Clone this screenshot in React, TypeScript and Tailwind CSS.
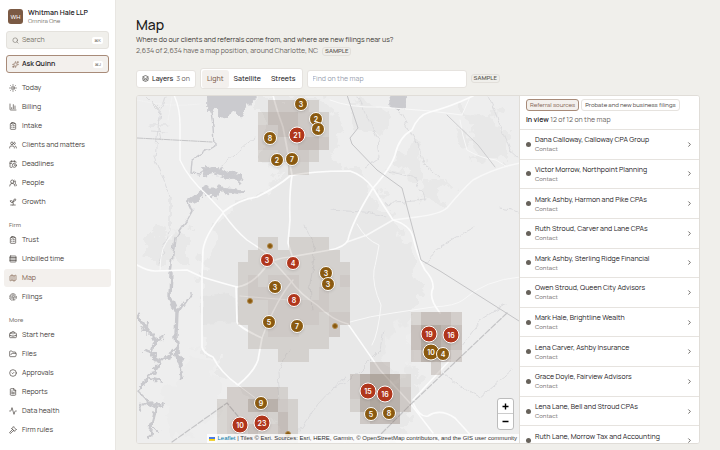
import type { ReactNode } from "react";
import {
  Activity,
  BriefcaseBusiness,
  CalendarClock,
  ChartColumn,
  ChevronRight,
  CircleCheck,
  ClipboardList,
  FileText,
  Fingerprint,
  FolderOpen,
  Gavel,
  Layers,
  Map as MapIcon,
  Rows4,
  Search,
  Sparkles,
  Sprout,
  Sun,
  Users,
  UsersRound,
  type LucideIcon,
} from "lucide-react";

type NavItem = { label: string; icon: LucideIcon; active?: boolean };

const primary: NavItem[] = [
  { label: "Today", icon: Sun },
  { label: "Billing", icon: ChartColumn },
  { label: "Intake", icon: ClipboardList },
  { label: "Clients and matters", icon: Users },
  { label: "Deadlines", icon: CalendarClock },
  { label: "People", icon: UsersRound },
  { label: "Growth", icon: Sprout },
];

const firm: NavItem[] = [
  { label: "Trust", icon: ClipboardList },
  { label: "Unbilled time", icon: Rows4 },
  { label: "Map", icon: MapIcon, active: true },
  { label: "Filings", icon: Fingerprint },
];

const more: NavItem[] = [
  { label: "Start here", icon: BriefcaseBusiness },
  { label: "Files", icon: FolderOpen },
  { label: "Approvals", icon: CircleCheck },
  { label: "Reports", icon: FileText },
  { label: "Data health", icon: Activity },
  { label: "Firm rules", icon: Gavel },
];

const contacts = [
  "Dana Calloway, Calloway CPA Group",
  "Victor Morrow, Northpoint Planning",
  "Mark Ashby, Harmon and Pike CPAs",
  "Ruth Stroud, Carver and Lane CPAs",
  "Mark Ashby, Sterling Ridge Financial",
  "Owen Stroud, Queen City Advisors",
  "Mark Hale, Brightline Wealth",
  "Lena Carver, Ashby Insurance",
  "Grace Doyle, Fairview Advisors",
  "Lena Lane, Bell and Stroud CPAs",
  "Ruth Lane, Morrow Tax and Accounting",
];

// World coordinates of the map canvas' top left corner.
const ORIGIN = { x: 137, y: 96 };

type Marker = { x: number; y: number; n?: number; hot?: boolean };

const markers: Marker[] = [
  { x: 301, y: 104, n: 3 },
  { x: 316, y: 119, n: 2 },
  { x: 318, y: 129, n: 4 },
  { x: 270, y: 138, n: 8 },
  { x: 297, y: 135, n: 21, hot: true },
  { x: 277, y: 160, n: 2 },
  { x: 292, y: 159, n: 7 },
  { x: 270, y: 246 },
  { x: 267, y: 260, n: 3, hot: true },
  { x: 293, y: 263, n: 4, hot: true },
  { x: 326, y: 273, n: 3 },
  { x: 328, y: 284, n: 3 },
  { x: 275, y: 287, n: 3 },
  { x: 294, y: 300, n: 8, hot: true },
  { x: 250, y: 301 },
  { x: 269, y: 322, n: 5 },
  { x: 297, y: 326, n: 7 },
  { x: 335, y: 326 },
  { x: 429, y: 334, n: 19, hot: true },
  { x: 451, y: 335, n: 16, hot: true },
  { x: 431, y: 352, n: 10 },
  { x: 443, y: 354, n: 4 },
  { x: 368, y: 391, n: 15, hot: true },
  { x: 385, y: 394, n: 16, hot: true },
  { x: 371, y: 414, n: 5 },
  { x: 389, y: 413, n: 8 },
  { x: 261, y: 403, n: 9 },
  { x: 240, y: 425, n: 10, hot: true },
  { x: 262, y: 423, n: 23, hot: true },
  { x: 288, y: 434 },
];

// Density grids: one digit per cell, a dot for an empty cell.
const CELL_W = 10.18;
const CELL_H = 12.46;
const density = [
  { x: 257.7, y: 100, rows: [".22221.", "1333221", "2233221", "2222332", "112221.", "...11.."] },
  {
    x: 237.7,
    y: 237.3,
    rows: [
      "..11.1111..",
      ".111111111.",
      "11111111111",
      "12122211112",
      "12222211211",
      "11122222211",
      "11122222122",
      ".112221112.",
      ".11111111..",
      "....111....",
    ],
  },
  { x: 217, y: 387, rows: [".222221.", "12244421", "12222131", "12232231", "12222221"] },
  { x: 349.5, y: 362, rows: ["..22..", "245541", "245542", "145442", ".2333."] },
  { x: 410.7, y: 312.3, rows: ["13332", "35543", "35543", "24432", "..2.."] },
];
const shade = [0, 0.15, 0.2, 0.28, 0.36, 0.43];

function NavList({ items }: { items: NavItem[] }) {
  return (
    <ul className="flex flex-col gap-px">
      {items.map(({ label, icon: Icon, active }) => (
        <li key={label}>
          <a
            href="#"
            className={
              active
                ? "flex h-[18px] items-center gap-[5px] rounded-[3px] bg-[#f3f0ed] pl-[5px] text-[#80604d]"
                : "flex h-[18px] items-center gap-[5px] rounded-[3px] pl-[5px] text-[#45403b]"
            }
          >
            <Icon className="size-2 shrink-0" strokeWidth={2} />
            {label}
          </a>
        </li>
      ))}
    </ul>
  );
}

function SectionLabel({ children }: { children: ReactNode }) {
  return <h2 className="flex h-5 items-center pt-2 pl-[5px] text-[6px] font-medium text-[#77726a]">{children}</h2>;
}

function Sample() {
  return (
    <span className="rounded-[3px] border border-[#e2dfda] px-[2px] text-[6px] leading-[7px] font-semibold text-[#5f5a53]">
      SAMPLE
    </span>
  );
}

function BaseMap() {
  return (
    <svg
      viewBox="137 96 382 347"
      preserveAspectRatio="xMinYMin slice"
      className="block h-full w-full"
      fill="none"
      strokeLinecap="round"
      strokeLinejoin="round"
      aria-hidden="true"
    >
      <defs>
        <filter id="shore" x="-20%" y="-20%" width="140%" height="140%">
          <feTurbulence type="fractalNoise" baseFrequency="0.13" numOctaves="3" seed="8" />
          <feDisplacementMap in="SourceGraphic" scale="11" xChannelSelector="R" yChannelSelector="G" />
        </filter>
        <filter id="edge" x="-10%" y="-10%" width="120%" height="120%">
          <feTurbulence type="fractalNoise" baseFrequency="0.06" numOctaves="4" seed="3" />
          <feDisplacementMap in="SourceGraphic" scale="34" xChannelSelector="R" yChannelSelector="G" />
        </filter>
        <filter id="creek" x="-10%" y="-10%" width="120%" height="120%">
          <feTurbulence type="fractalNoise" baseFrequency="0.12" numOctaves="2" seed="5" />
          <feDisplacementMap in="SourceGraphic" scale="7" xChannelSelector="R" yChannelSelector="G" />
        </filter>
      </defs>
      <rect x="137" y="96" width="382" height="347" fill="#eeeeee" />
      <g fill="#e8e8e8" filter="url(#edge)">
        <path d="M225 215 L262 190 L330 160 L372 185 L400 230 L425 290 L400 330 L420 380 L400 440 L300 450 L240 390 L205 350 L200 270Z" />
        <path d="M262 95 L325 95 L340 130 L330 172 L275 180 L262 150Z" />
        <path d="M462 112 L505 118 L505 160 L470 158Z" />
        <path d="M405 140 L425 150 L420 182 L395 175Z" />
        <path d="M150 232 L190 235 L190 262 L140 262Z" />
        <path d="M425 175 L450 185 L440 205 L420 200Z" />
        <path d="M350 100 L385 105 L395 135 L365 130Z" />
      </g>
      <g fill="#e3e3e3">
        <path d="M203 296 L228 293 L238 301 L238 322 L203 324Z" filter="url(#creek)" />
      </g>
      <g fill="#ececec" filter="url(#edge)">
        <path d="M385 335 L410 320 L412 360 L392 390Z" />
        <path d="M195 350 L225 375 L215 420 L175 440 L160 400Z" />
      </g>

      <g stroke="#d7d7d9" strokeWidth="0.8" filter="url(#creek)">
        <path d="M147 97 L160 110 L155 157 L170 197 L170 230 L158 265" />
        <path d="M165 97 L158 120 L162 140 M150 125 L168 125 M152 131 L166 132" />
        <path d="M358 97 L378 140 L380 158 L365 168" />
        <path d="M400 112 L420 150 L425 165 L440 178" />
        <path d="M385 170 L415 178 L425 200 L385 204" />
        <path d="M488 97 L500 125 L510 150 L519 158" />
        <path d="M500 208 L512 210 L519 212" />
        <path d="M474 228 L440 246 L424 265" />
        <path d="M330 210 L365 212 L385 216" />
        <path d="M255 137 L240 150 L222 165" />
        <path d="M330 390 L352 378 L380 350 L384 330" />
        <path d="M443 372 L458 385 L480 397 L512 370" />
        <path d="M507 303 L480 320 L462 345" />
        <path d="M305 225 L315 250 L310 285 L312 310" />
        <path d="M290 350 L278 372 L280 400" />
        <path d="M300 430 L318 404 L345 375" />
      </g>

      <g fill="#cbcbcf" stroke="#cbcbcf" strokeWidth="1" filter="url(#shore)">
        <path d="M208 92 L258 92 L253 103 L244 108 L240 117 L232 112 L222 118 L216 108 L208 113Z" />
        <path d="M389 95 L402 92 L405 104 L400 110 L391 107Z" />
        <path d="M204 168 L216 166 L226 171 L240 177 L242 182 L228 178 L214 174 L206 176Z" />
        <path d="M187 200 L196 194 L206 187 L222 187 L244 190 L240 194 L222 191 L214 198 L208 193 L196 202Z" />
      </g>
      <g stroke="#c9c9cd" filter="url(#creek)">
        <path d="M211 112 L213 125 L214 146 L192 160 L191 173 L201 174 L210 168" strokeWidth="1.4" />
        <path d="M188 202 L192 211 L186 222 L175 238 L171 272" strokeWidth="1.6" />
        <path d="M171 272 L170 297 L177 313 L176 335 L179 362" strokeWidth="3.4" />
        <path d="M191 293 L185 302 L177 314" strokeWidth="1.8" />
      </g>
      <g stroke="#c9c9cd" strokeWidth="3" filter="url(#shore)">
        <path d="M138 314 L146 330 L156 340 L152 352 L158 364 L148 378 L138 390 L146 398 L156 408 L152 424 L150 437" />
        <path d="M156 362 L168 356 L176 350 L180 362 L182 376" />
        <path d="M158 340 L166 334 M146 330 L148 322 M148 378 L162 382 M156 408 L166 404 M152 424 L160 432 M146 400 L140 410 M152 352 L144 350" strokeWidth="2" />
      </g>

      <g stroke="#f8f8f8" strokeWidth="1">
        <path d="M460 120 Q462 135 467 150 Q480 158 496 160 L507 167" />
        <path d="M357 224 Q366 240 379 245 Q376 262 374 270 Q372 285 381 305 Q378 335 372 345" />
        <path d="M350 322 Q370 316 393 313 L433 307 Q455 306 463 300 Q485 280 520 277" />
        <path d="M137 100 Q170 108 200 104" opacity="0.4" />
        <path d="M330 100 Q350 108 380 107 L430 111 L462 115 L470 97" />
        <path d="M347 242 L367 235 L393 220 L417 217 Q440 214 447 208 Q462 190 473 180 Q495 168 520 163" strokeWidth="1.5" />
        <path d="M240 296 L290 300" />
        <path d="M172 97 L168 120" opacity="0.4" />
        <path d="M160 270 Q160 245 172 235" />
      </g>
      <g stroke="#fcfcfc" strokeWidth="1.7">
        <path d="M174 95 Q180 108 180 125 L180 160 Q188 178 207 195 L223 212" strokeWidth="1.4" />
        <path d="M223 213 Q205 235 203 250 L202 277 L202 347 Q203 353 213 357 Q220 372 238 385 Q254 372 258 360 L262 338 Q240 328 237 322 L236 287" />
        <path d="M137 265 Q148 271 155 271 L187 270 L202 277 Q225 284 237 287 Q253 285 267 265 Q275 258 290 257 L330 250 Q345 247 348 240 Q352 222 373 188 Q391 168 395 155 Q399 137 412 130 Q418 115 430 112 Q450 107 473 96" />
        <path d="M223 212 Q240 199 257 197 Q277 187 290 176 Q310 171 350 171 Q363 175 373 188 Q383 205 393 220 Q410 225 413 237 Q418 258 425 270 Q434 280 433 288 Q428 298 440 313" />
        <path d="M273 95 Q276 108 283 127 L292 175 Q289 195 290 220 L288 243 L294 262" />
        <path d="M223 213 Q235 230 247 240 L265 252 L290 280 Q300 294 317 305 Q332 320 348 324 L380 370 L410 403 L433 433" strokeWidth="1.4" />
        <path d="M293 280 Q276 300 262 338" strokeWidth="1.4" />
        <path d="M450 360 L413 400 M413 403 Q420 418 428 416 Q440 408 455 418 L475 440" />
        <path d="M238 385 L258 400" strokeWidth="1" />
      </g>

      <g stroke="#c4c4c6" strokeWidth="1">
        <path d="M347 95 L358 128 L350 138 L352 144 L377 170 L402 188 L421 260 L440 271 L519 321" />
        <path d="M447 115 L478 145 L495 167" strokeWidth="0.8" />
        <path d="M137 138 L212 142" strokeDasharray="6 1 1 1" />
        <path d="M507 313 L410 405 L375 440 M172 442 L227 403 L246 426" strokeWidth="1.2" strokeDasharray="6 2" />
      </g>

      <g fill="#67503f" stroke="none" shapeRendering="crispEdges">
        {density.map((block) =>
          block.rows.map((row, j) =>
            [...row].map((digit, i) =>
              digit === "." ? null : (
                <rect
                  key={`${block.x}-${j}-${i}`}
                  x={block.x + i * CELL_W}
                  y={block.y + j * CELL_H}
                  width={CELL_W}
                  height={CELL_H}
                  opacity={shade[Number(digit)]}
                />
              ),
            ),
          ),
        )}
      </g>
    </svg>
  );
}

function MapMarker({ x, y, n, hot }: Marker) {
  const place = { left: x - ORIGIN.x, top: y - ORIGIN.y };
  if (n === undefined) {
    return (
      <button
        type="button"
        aria-label="Single record"
        style={place}
        className="absolute size-[6px] -translate-1/2 rounded-full border border-[#b08a4c] bg-[#8a5a10]"
      />
    );
  }
  const size = n >= 10 ? "size-[17px]" : "size-[14px]";
  const color = hot ? "bg-[#b0361c]" : "bg-[#8a5a10]";
  return (
    <button
      type="button"
      style={place}
      className={`absolute flex -translate-1/2 items-center justify-center rounded-full border border-white font-['Inter',sans-serif] text-[7px] leading-none font-semibold text-white shadow-sm ${size} ${color}`}
    >
      {n}
    </button>
  );
}

export default function App() {
  return (
    <div className="flex h-screen overflow-hidden bg-[#f0efeb] font-['Manrope','Inter',sans-serif] text-[7px] leading-[10px] text-[#3b3733]">
      <aside className="w-[116px] shrink-0 border-r border-[#e8e6e2] bg-white px-1 pt-2">
        <div className="flex items-center gap-[5px] pl-1">
          <span className="flex size-[15px] items-center justify-center rounded-[3px] bg-[#7b5a44] text-[6px] font-medium text-white">
            WH
          </span>
          <div>
            <p className="text-[7px] leading-[9px] font-semibold text-[#23201d]">Whitman Hale LLP</p>
            <p className="text-[6px] leading-2 text-[#77726a]">Omnira One</p>
          </div>
        </div>

        <div className="mx-[2px] mt-[6px] flex flex-col gap-[6px]">
          <button
            type="button"
            className="flex h-[18px] items-center gap-[3px] rounded-[3px] border border-[#e4e2dd] bg-[#f0efeb] px-[5px] text-[#77726a]"
          >
            <Search className="size-[7px]" />
            Search
            <kbd className="ml-auto rounded-[2px] bg-white px-[2px] font-['Inter',sans-serif] text-[4px] leading-[7px]">⌘K</kbd>
          </button>
          <button
            type="button"
            className="flex h-[18px] items-center gap-[3px] rounded-[3px] border border-[#a88b79] bg-[#f3f0ed] px-[5px] font-semibold text-[#23201d]"
          >
            <Sparkles className="size-[7px] text-[#80604d]" />
            Ask Quinn
            <kbd className="ml-auto rounded-[2px] bg-white px-[2px] font-['Inter',sans-serif] text-[4px] leading-[7px] font-normal text-[#77726a]">
              ⌘J
            </kbd>
          </button>
        </div>

        <nav className="mt-[6px]">
          <NavList items={primary} />
          <SectionLabel>Firm</SectionLabel>
          <NavList items={firm} />
          <SectionLabel>More</SectionLabel>
          <NavList items={more} />
        </nav>
      </aside>

      <main className="flex min-w-0 flex-1 flex-col px-5 pt-[15px] pb-[6px]">
        <h1 className="text-[14px] leading-[19px] font-medium text-[#1b1917]">Map</h1>
        <p className="text-[7px] leading-[11px]">
          Where do our clients and referrals come from, and where are new filings near us?
        </p>
        <p className="flex items-center gap-1 leading-3 text-[#6b665f]">
          2,634 of 2,634 have a map position, around Charlotte, NC
          <Sample />
        </p>

        <div className="mt-[11px] flex h-[21px] items-center gap-1">
          <button
            type="button"
            className="flex h-[18px] items-center gap-[3px] rounded-[3px] border border-[#e6e3df] bg-white px-[5px] font-medium text-[#23201d]"
          >
            <Layers className="size-[7px]" />
            Layers
            <span className="font-normal text-[#6b665f]">3 on</span>
          </button>
          <div className="flex h-[21px] items-center rounded-[3px] border border-[#e6e3df] bg-white px-px font-medium text-[#23201d]">
            <button type="button" aria-pressed="true" className="h-[18px] rounded-[3px] bg-[#f3f0ed] px-[5px] text-[#80604d]">
              Light
            </button>
            <button type="button" className="h-[18px] px-[5px]">
              Satellite
            </button>
            <button type="button" className="h-[18px] px-[5px]">
              Streets
            </button>
          </div>
          <input
            type="text"
            aria-label="Find on the map"
            placeholder="Find on the map"
            className="h-[18px] w-40 rounded-[3px] border border-[#e6e3df] bg-white px-[5px] placeholder:text-[#99a1af]"
          />
          <Sample />
        </div>

        <div className="mt-[6px] flex min-h-0 flex-1 overflow-hidden rounded-[3px] border border-[#e0ddd8] bg-white">
          <section aria-label="Map of filings" className="relative min-w-0 flex-1 overflow-hidden bg-[#eeeeee]">
            <BaseMap />
            {markers.map((m) => (
              <MapMarker key={`${m.x}-${m.y}`} {...m} />
            ))}
            <div className="absolute right-[5px] bottom-[13px] flex flex-col overflow-hidden rounded-[3px] border border-[#bcbcbc] bg-white text-black">
              <button type="button" aria-label="Zoom in" className="flex h-[15px] w-[15px] items-center justify-center border-b border-[#cccccc]">
                <svg viewBox="0 0 7 7" className="size-[7px]" stroke="currentColor" strokeWidth="1.4">
                  <path d="M0.5 3.5H6.5M3.5 0.5V6.5" />
                </svg>
              </button>
              <button type="button" aria-label="Zoom out" className="flex h-[15px] w-[15px] items-center justify-center">
                <svg viewBox="0 0 7 7" className="size-[7px]" stroke="currentColor" strokeWidth="1.4">
                  <path d="M0.5 3.5H6.5" />
                </svg>
              </button>
            </div>
            <p className="absolute right-0 bottom-0 flex items-center bg-white/80 px-[2px] font-['Liberation_Sans',sans-serif] text-[6px] leading-[9px] whitespace-pre text-[#333333]">
              <svg viewBox="0 0 12 8" className="mr-[2px] h-1 w-[6px]">
                <path fill="#4C7BE1" d="M0 0h12v4H0z" />
                <path fill="#FFD500" d="M0 4h12v3H0z" />
                <path fill="#E0BC00" d="M0 7h12v1H0z" />
              </svg>
              <a href="#" className="text-[#0078a8]">
                Leaflet
              </a>
              {" | Tiles © Esri. Sources: Esri, HERE, Garmin, © OpenStreetMap contributors, and the GIS user community"}
            </p>
          </section>

          <section aria-label="Referral sources" className="flex w-[180px] shrink-0 flex-col border-l border-[#e0ddd8] bg-white">
            <div className="flex flex-col gap-1 border-b border-[#e6e3df] px-[6px] pt-[3px] pb-1">
              <div className="flex gap-[2px] text-[6px] leading-[10px]">
                <button type="button" aria-pressed="true" className="rounded-[3px] border border-[#a88b79] bg-[#f3f0ed] px-[3px] text-[#80604d]">
                  Referral sources
                </button>
                <button type="button" className="rounded-[3px] border border-[#e6e3df] px-[3px] text-[#45403b]">
                  Probate and new business filings
                </button>
              </div>
              <p className="leading-[10px] text-[#6b665f]">
                <strong className="font-semibold text-[#23201d]">In view</strong> 12 of 12 on the map
              </p>
            </div>
            <ul className="grid h-[326px] shrink-0 auto-rows-fr">
              {contacts.map((name) => (
                <li key={name} className="border-b border-[#e6e3df]">
                  <button type="button" className="flex h-full w-full items-center gap-1 pr-[6px] pl-[6px] text-left">
                    <span className="size-[5px] shrink-0 rounded-full bg-[#67625b]" />
                    <span className="flex-1">
                      <span className="block text-[7px] leading-[10px] text-[#23201d]">{name}</span>
                      <span className="block text-[6px] leading-2 text-[#6b665f]">Contact</span>
                    </span>
                    <ChevronRight className="size-[7px] text-[#3b3733]" strokeWidth={2.5} />
                  </button>
                </li>
              ))}
            </ul>
          </section>
        </div>
      </main>
    </div>
  );
}
